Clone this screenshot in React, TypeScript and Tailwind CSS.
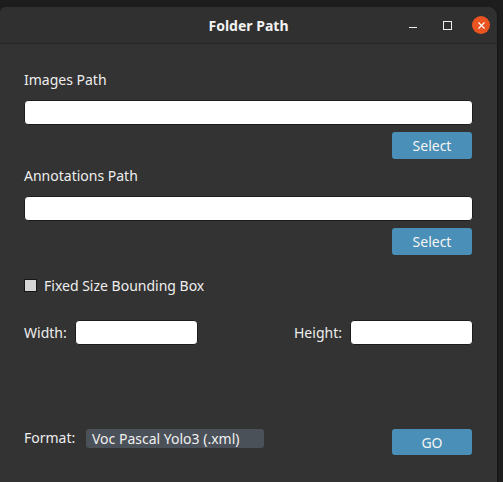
import { X } from "lucide-react";

function PathField({ label }: { label: string }) {
  return (
    <div className="flex flex-col">
      <label className="h-5 leading-5 text-[14px] text-[#eeeeee]">{label}</label>
      <input
        className="mt-[10px] h-[25px] w-full rounded-[4px] border border-[#1c1c1c] bg-white px-2 text-[13px] text-black outline-none"
        type="text"
      />
      <button
        className="mt-[7px] mr-px h-[27px] w-[80px] self-end rounded-[3px] bg-[#4a8fb7] text-[14px] text-[#f4f4f4]"
        type="button"
      >
        Select
      </button>
    </div>
  );
}

export default function App() {
  return (
    <div
      className="h-[482px] w-[503px] overflow-hidden bg-[#1d1d1d] pt-[7px]"
      style={{ fontFamily: '"Noto Sans", "Open Sans", sans-serif' }}
    >
      <div className="flex h-[475px] w-[498px] flex-col rounded-tr-[9px] rounded-tl-[6px] border-r border-[#151515] bg-[#333333]">
        {/* title bar */}
        <div className="relative flex h-[37px] items-center justify-center rounded-tr-[9px] rounded-tl-[6px] border-b border-[#262626] bg-[#303030]">
          <span className="text-[14px] font-bold text-[#f2f2f2]">Folder Path</span>
          <div className="absolute right-[7px] top-[9px] flex items-center">
            <span className="mr-[26px] mt-[5px] block h-px w-[8px] bg-[#eeeeee]" />
            <span className="mr-[20px] block h-[9px] w-[9px] border border-[#eeeeee]" />
            <span className="flex h-[18px] w-[18px] items-center justify-center rounded-full bg-[#e95420]">
              <X size={11} strokeWidth={2.5} color="#ffffff" />
            </span>
          </div>
        </div>

        {/* body */}
        <div className="flex flex-col pl-[24px] pr-[24px] pt-[26px] text-[14px] text-[#eeeeee]">
          <PathField label="Images Path" />
          <div className="mt-[7px]">
            <PathField label="Annotations Path" />
          </div>

          <label className="mt-[20px] flex h-5 items-center">
            <span className="block h-[13px] w-[13px] border border-[#161616] bg-[#d6d6d6]" />
            <span className="ml-[7px]">Fixed Size Bounding Box</span>
          </label>

          <div className="mt-[25px] flex h-[25px] items-center">
            <span className="w-[51px]">Width:</span>
            <input
              className="h-[25px] w-[123px] rounded-[4px] border border-[#1c1c1c] bg-white outline-none"
              type="text"
            />
            <span className="ml-auto w-[56px]">Height:</span>
            <input
              className="h-[25px] w-[123px] rounded-[4px] border border-[#1c1c1c] bg-white outline-none"
              type="text"
            />
          </div>

          <div className="mt-[84px] flex items-start">
            <span className="h-[19px] w-[62px] leading-[17px]">Format:</span>
            <div className="flex h-[19px] w-[178px] items-center rounded-[3px] bg-[#4b5158] pl-[6px] text-[14px] text-[#f0f0f0]">
              Voc Pascal Yolo3 (.xml)
            </div>
            <button
              className="ml-auto mr-px h-[26px] w-[80px] rounded-[3px] bg-[#4a8fb7] text-[14px] text-[#f4f4f4]"
              type="button"
            >
              GO
            </button>
          </div>
        </div>
      </div>
    </div>
  );
}
